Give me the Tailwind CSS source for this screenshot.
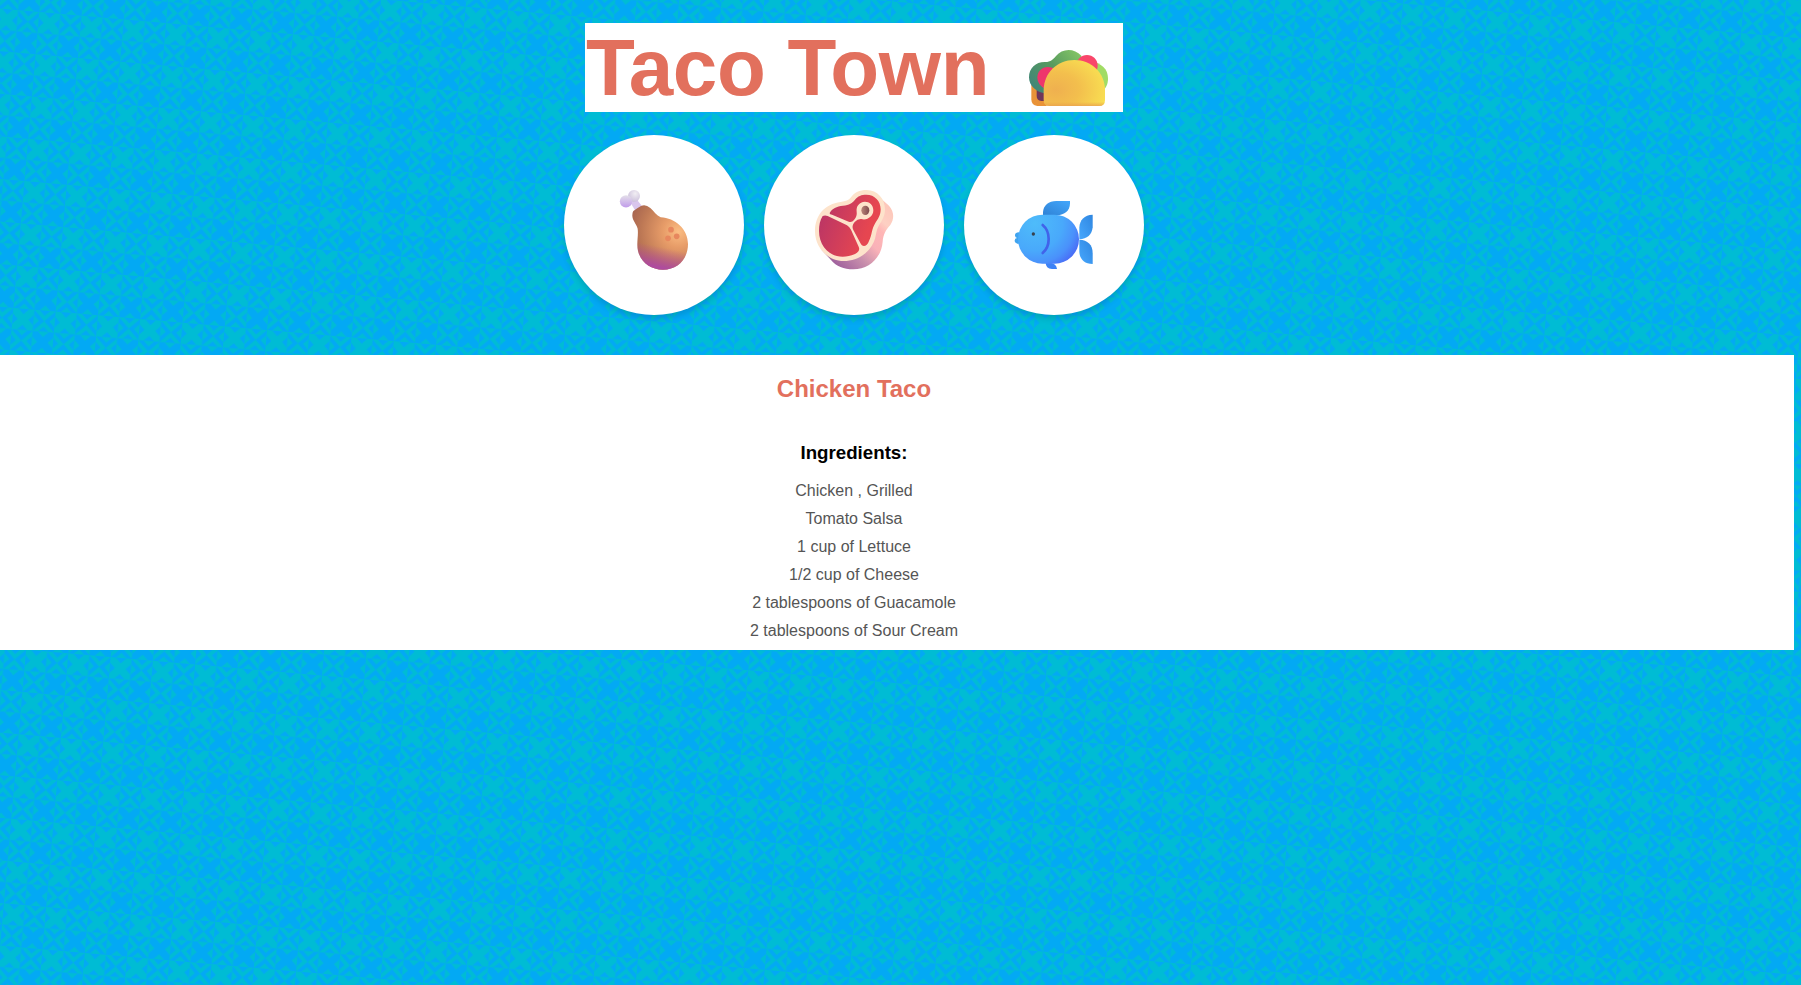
<!DOCTYPE html>
<html lang="en">
<head>
<meta charset="utf-8">
<title>Taco Town</title>
<script src="https://cdn.jsdelivr.net/npm/@tailwindcss/browser@4"></script>
</head>
<body class="relative h-[985px] w-[1801px] overflow-hidden bg-[#03a9f4] font-['Liberation_Sans',Arial,sans-serif]">
<svg class="absolute inset-0 h-full w-full" aria-hidden="true">
  <defs>
    <pattern id="tiles" width="40" height="40" patternUnits="userSpaceOnUse" patternTransform="translate(39.3 12) rotate(5) scale(1.0607)">
      <rect width="40" height="40" fill="#03a9f4"/>
      <path fill="#00bcd4" d="M0 0H20V20H0ZM20 0H40L30 10ZM20 20H40L30 10ZM0 20V40L10 30ZM20 20V40L10 30Z"/>
      <path fill="#03a9f4" d="M5 0H15L10 5ZM5 20H15L10 15ZM0 5V15L5 10ZM20 5V15L15 10ZM25 0H35L30 5ZM25 20H35L30 15ZM0 25V35L5 30ZM20 25V35L15 30Z"/>
      <path fill="#00bcd4" d="M20 5V15L25 10ZM40 5V15L35 10ZM5 20H15L10 25ZM5 40H15L10 35ZM25 20H35L30 25ZM25 40H35L30 35ZM20 25V35L25 30ZM40 25V35L35 30Z"/>
    </pattern>
  </defs>
  <rect width="1801" height="985" fill="url(#tiles)"/>
</svg>
<main class="relative flex flex-col pt-[23px]">
  <div class="flex w-[1708px] flex-col items-center">
    <h1 class="flex h-[89px] w-[538px] items-center bg-white pl-[1px] text-[80px] leading-[89px] font-bold tracking-[-0.3px] text-[#e2705d]"><span class="whitespace-nowrap">Taco Town</span>
      <svg class="mt-[16px] mr-[13px] ml-auto h-16 w-[84px] shrink-0" viewBox="498 102 252 192" aria-label="Taco">
        <defs>
          <radialGradient id="shell" cx=".2" cy=".65" r=".85"><stop stop-color="#efb04f"/><stop offset=".45" stop-color="#f3bf4d"/><stop offset="1" stop-color="#f9e052"/></radialGradient>
          <linearGradient id="leaf" x1="0" y1=".8" x2="1" y2=".1"><stop stop-color="#3f8579"/><stop offset=".5" stop-color="#579a5f"/><stop offset="1" stop-color="#86c766"/></linearGradient>
          <linearGradient id="edge" x1="0" y1="0" x2="0" y2="1"><stop offset=".91" stop-color="#e9a245" stop-opacity="0"/><stop offset="1" stop-color="#e9a050" stop-opacity=".8"/></linearGradient>
        </defs>
        <path d="M514 225H560V288H532Q514 286 514 268Z" fill="#e99338"/>
        <path d="M530 240H560V273H544Q530 271 530 258Z" fill="#70365a"/>
        <path d="M690 155C725 157 744 178 744 205C744 223 738 235 728 242L690 220Z" fill="#a1dc65"/>
        <path d="M507 202C507 174 528 155 556 156C572 156 580 148 588 138C606 115 642 113 664 137L670 180L600 230L558 251C528 247 507 227 507 202Z" fill="url(#leaf)"/>
        <circle cx="681" cy="167" r="32" fill="#f9466a"/>
        <path d="M532 203C532 184 546 171 563 171Q575 171 584 176L556 236Q533 226 532 203Z" fill="#ee356c"/>
        <path d="M551 241C551 188 592 150 643 150C695 150 735 189 735 241V270Q735 288 717 288H569Q551 288 551 270Z" fill="url(#shell)"/>
        <path d="M551 241C551 188 592 150 643 150C695 150 735 189 735 241V270Q735 288 717 288H569Q551 288 551 270Z" fill="url(#edge)"/>
      </svg>
    </h1>
    <div class="mt-[23px] flex gap-5">
      <div class="size-[180px] rounded-full bg-white shadow-[0_4px_6px_rgba(0,0,0,0.13)]">
        <svg class="size-full" viewBox="42 30 540 540" aria-label="Chicken">
          <defs>
            <radialGradient id="meat" gradientUnits="userSpaceOnUse" cx="385" cy="320" r="155"><stop stop-color="#fbbd83"/><stop offset=".3" stop-color="#e79c68"/><stop offset=".72" stop-color="#bd7855"/><stop offset="1" stop-color="#a4624f"/></radialGradient>
            <linearGradient id="glaze" gradientUnits="userSpaceOnUse" x1="345" y1="368" x2="332" y2="428"><stop stop-color="#b34e92" stop-opacity="0"/><stop offset="1" stop-color="#ae4b9f"/></linearGradient>
            <linearGradient id="bone" x1="0" y1="0" x2="0" y2="1"><stop stop-color="#e4e0e9"/><stop offset="1" stop-color="#c09bea"/></linearGradient>
            <radialGradient id="knob" cx=".6" cy=".3" r=".7"><stop stop-color="#f1eef3"/><stop offset="1" stop-color="#cdc1dc"/></radialGradient>
          </defs>
          <path d="M236 224L252 213L280 248L259 262Z" fill="#d9c6ed"/>
          <circle cx="252" cy="213" r="18" fill="url(#knob)"/>
          <circle cx="228" cy="229" r="18.500" fill="url(#bone)"/>
          <path d="M250 258Q262 249 273 243Q286 236 301 249C312 259 319 271 332 277C375 279 414 312 414 357C414 402 383 434 339 434C296 434 262 403 262 359C262 341 265 326 263 311C259 296 246 286 247 270Q247 262 250 258Z" fill="url(#meat)"/>
          <path d="M250 258Q262 249 273 243Q286 236 301 249C312 259 319 271 332 277C375 279 414 312 414 357C414 402 383 434 339 434C296 434 262 403 262 359C262 341 265 326 263 311C259 296 246 286 247 270Q247 262 250 258Z" fill="url(#glaze)"/>
          <g fill="#e7875e"><circle cx="363" cy="314" r="8.500"/><circle cx="380" cy="334" r="8.500"/><circle cx="354" cy="340" r="8.500"/></g>
        </svg>
      </div>
      <div class="size-[180px] rounded-full bg-white shadow-[0_4px_6px_rgba(0,0,0,0.13)]">
        <svg class="size-full" viewBox="42 30 540 540" aria-label="Beef">
          <defs>
            <linearGradient id="fat" gradientUnits="userSpaceOnUse" x1="250" y1="420" x2="420" y2="250"><stop stop-color="#9d5e9c"/><stop offset=".3" stop-color="#c88fac"/><stop offset=".52" stop-color="#f9b2b8"/><stop offset=".72" stop-color="#ffb6b6"/><stop offset=".82" stop-color="#fdd0c3"/><stop offset="1" stop-color="#fdc8bb"/></linearGradient>
            <linearGradient id="beef" gradientUnits="userSpaceOnUse" x1="210" y1="290" x2="345" y2="340"><stop stop-color="#bd3664"/><stop offset="1" stop-color="#e64650"/></linearGradient>
            <linearGradient id="marrow" x1="0" y1="0" x2="1" y2="0"><stop stop-color="#b98478"/><stop offset="1" stop-color="#7f4a4d"/></linearGradient>
          </defs>
          <path d="M375 205L417 242C433 259 433 283 421 300C408 315 400 326 398 350C394 399 357 433 310 433C281 433 259 424 243 405L215 375Z" fill="url(#fat)"/>
          <path d="M195 318C195 271 224 237 272 231C287 229 296 226 303 217C314 202 328 195 350 195C382 195 405 221 405 253C405 274 396 286 386 303C377 319 379 335 371 352C356 386 321 408 281 408C234 408 195 369 195 318Z" fill="#fde3cb"/>
          <path d="M239 264C246 250 260 244 279 242C298 240 307 234 315 224C324 213 334 209 349 209C374 209 392 228 392 253C392 270 385 281 376 294C365 311 366 330 357 348C351 365 337 368 331 354L310 315C306 307 307 299 314 291Q323 281 334 282C351 287 370 275 370 256C370 240 358 230 345 230C327 231 318 244 320 260Q322 274 312 285Q306 293 296 290L248 270Q238 268 239 264Z" fill="url(#beef)"/>
          <path d="M218 273Q225 270 233 273L291 301Q299 306 303 314L326 365Q331 376 321 383C307 392 293 395 278 395C237 395 207 362 207 318C207 300 210 285 218 273Z" fill="url(#beef)"/>
          <ellipse cx="346" cy="256" rx="12" ry="14" fill="url(#marrow)"/>
        </svg>
      </div>
      <div class="size-[180px] rounded-full bg-white shadow-[0_4px_6px_rgba(0,0,0,0.13)]">
        <svg class="size-full" viewBox="42 30 540 540" aria-label="Fish">
          <defs>
            <radialGradient id="fishBody" gradientUnits="userSpaceOnUse" cx="255" cy="295" r="150"><stop stop-color="#4ebcfa"/><stop offset=".55" stop-color="#49a9fb"/><stop offset=".8" stop-color="#4a91fb"/><stop offset="1" stop-color="#496af6"/></radialGradient>
            <linearGradient id="fin" x1="0" y1="1" x2="1" y2="0"><stop stop-color="#2f82d5"/><stop offset="1" stop-color="#43a7fc"/></linearGradient>
            <linearGradient id="tail" x1="1" y1="0" x2="0" y2="1"><stop stop-color="#2f86e0"/><stop offset="1" stop-color="#47a8fe"/></linearGradient>
          </defs>
          <path d="M279 270V262C280 241 296 228 319 228H360V236C359 257 344 270 321 270Z" fill="url(#fin)"/>
          <path d="M388 343V307C389 286 403 269 428 269V307C426 329 411 342 388 343Z" fill="url(#tail)"/>
          <path d="M388 344C413 345 428 359 428 384V417C403 417 389 402 388 381Z" fill="url(#tail)"/>
          <path d="M287 413H301Q319 415 321 432H306Q287 431 287 413Z" fill="#3d82f6"/>
          <path d="M207 322Q194 322 195 332Q196 337 201 339Q193 340 194 349Q196 357 208 356Z" fill="#40a4ef"/>
          <rect x="204" y="269" width="183" height="147" rx="73.500" fill="url(#fishBody)"/>
          <path d="M278 300C302 320 302 364 278 384" fill="none" stroke="#4163ea" stroke-width="8" stroke-linecap="round"/>
          <circle cx="250" cy="327" r="5" fill="#37414e"/>
        </svg>
      </div>
    </div>
  </div>
  <section class="mt-10 h-[295px] w-[1794px] bg-white">
    <div class="flex w-[1708px] flex-col items-center">
      <h2 class="mt-5 text-[24px] leading-[28px] font-bold text-[#e2705d]">Chicken Taco</h2>
      <h3 class="mt-[39px] text-[18.72px] leading-[22px] font-bold text-black">Ingredients:</h3>
      <ul class="mt-[13px] text-center text-base leading-[28px] text-[#555]">
        <li>Chicken , Grilled</li>
        <li>Tomato Salsa</li>
        <li>1 cup of Lettuce</li>
        <li>1/2 cup of Cheese</li>
        <li>2 tablespoons of Guacamole</li>
        <li>2 tablespoons of Sour Cream</li>
      </ul>
    </div>
  </section>
</main>
</body>
</html>
